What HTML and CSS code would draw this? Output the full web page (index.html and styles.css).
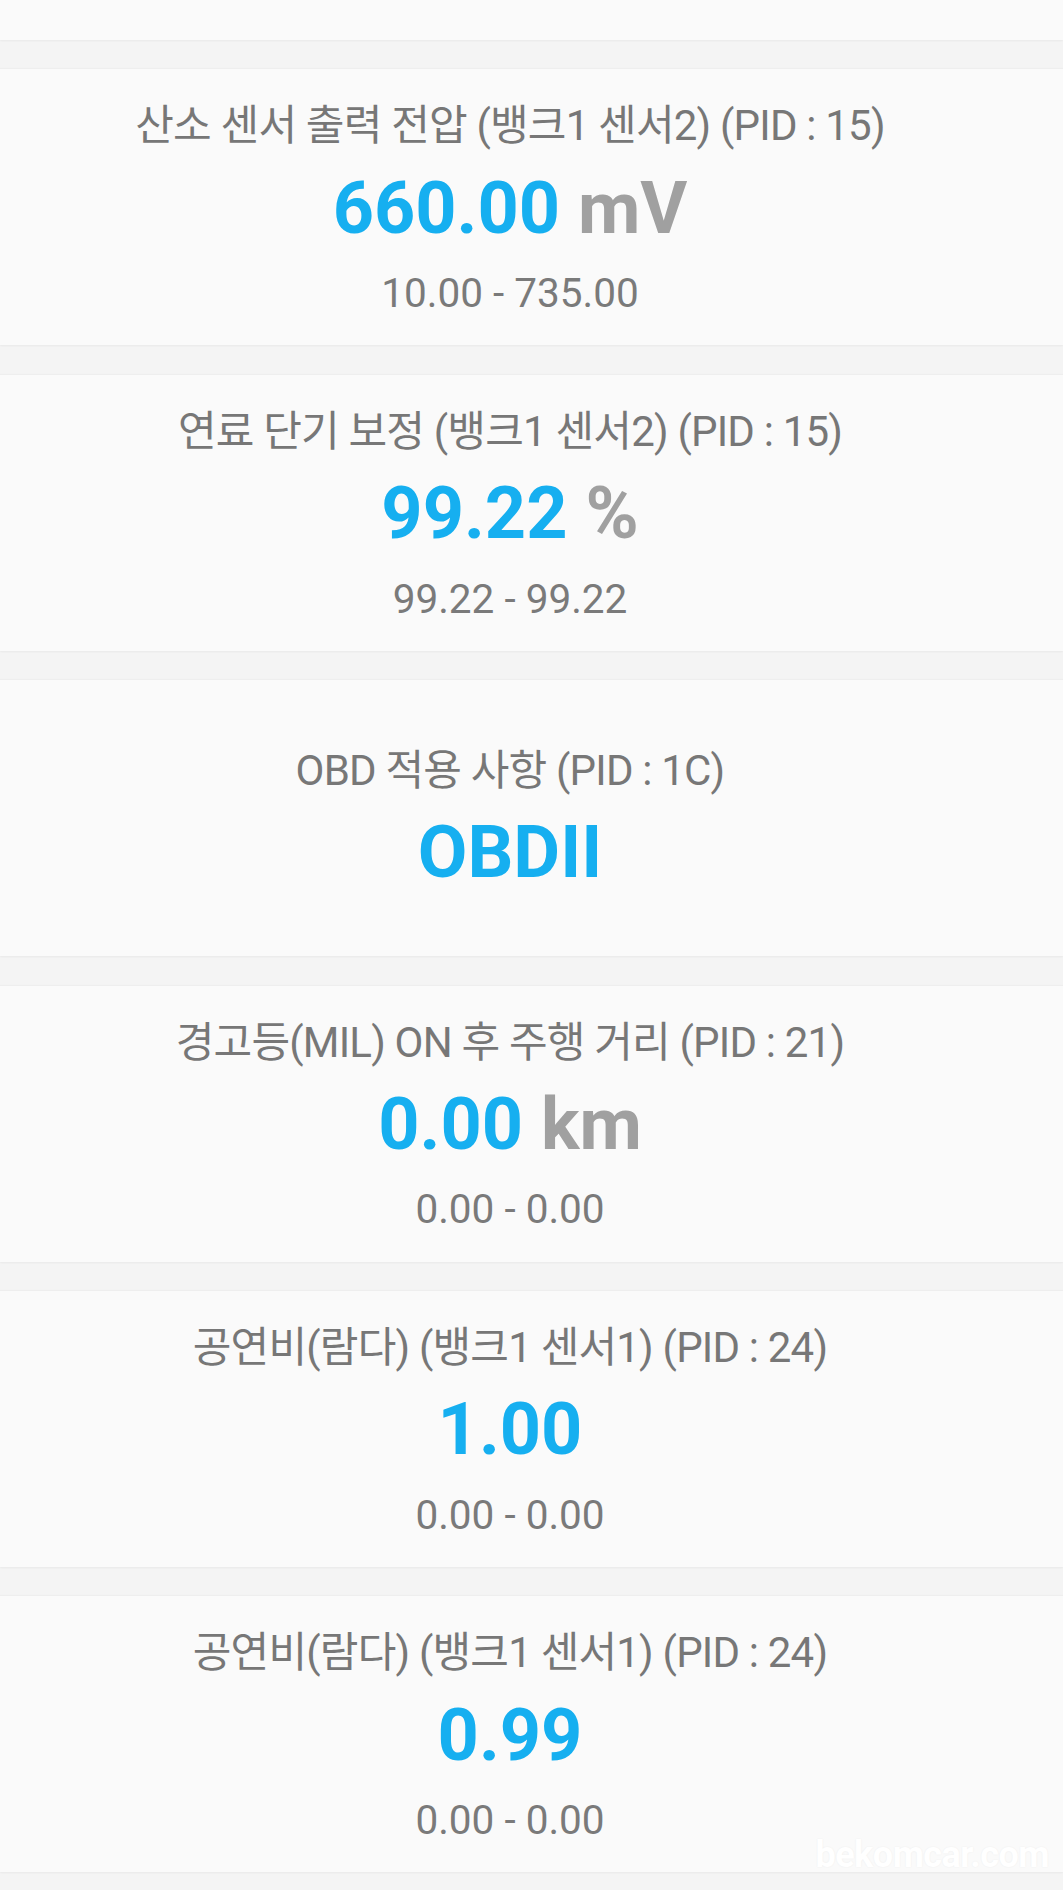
FILE: index.html
```html
<!DOCTYPE html>
<html lang="ko">
<head>
<meta charset="utf-8">
<title>PID 목록</title>
<link rel="stylesheet" href="styles.css">
</head>
<body>
<div class="list">
  <div class="card card-partial"></div>

  <div class="card">
    <div class="title">산소 센서 출력 전압 (뱅크1 센서2) (PID : 15)</div>
    <div class="value"><span class="num">660.00</span> <span class="unit">mV</span></div>
    <div class="range">10.00 - 735.00</div>
  </div>

  <div class="card">
    <div class="title">연료 단기 보정 (뱅크1 센서2) (PID : 15)</div>
    <div class="value"><span class="num">99.22</span> <span class="unit">%</span></div>
    <div class="range">99.22 - 99.22</div>
  </div>

  <div class="card">
    <div class="title">OBD 적용 사항 (PID : 1C)</div>
    <div class="value"><span class="num">OBDII</span></div>
  </div>

  <div class="card">
    <div class="title">경고등(MIL) ON 후 주행 거리 (PID : 21)</div>
    <div class="value"><span class="num">0.00</span> <span class="unit">km</span></div>
    <div class="range">0.00 - 0.00</div>
  </div>

  <div class="card">
    <div class="title">공연비(람다) (뱅크1 센서1) (PID : 24)</div>
    <div class="value"><span class="num">1.00</span></div>
    <div class="range">0.00 - 0.00</div>
  </div>

  <div class="card card-last">
    <div class="title">공연비(람다) (뱅크1 센서1) (PID : 24)</div>
    <div class="value"><span class="num">0.99</span></div>
    <div class="range">0.00 - 0.00</div>
    <div class="watermark">bekomcar.com</div>
  </div>
</div>
</body>
</html>
```
FILE: styles.css
```css
html, body {
  margin: 0;
  padding: 0;
}

body {
  background: #f4f4f4;
  font-family: Roboto, "Noto Sans CJK KR", sans-serif;
  width: 1063px;
  min-height: 1890px;
}

.list {
  display: flex;
  flex-direction: column;
  gap: 29.4px;
}

.card {
  position: relative;
  height: 276px;
  box-sizing: border-box;
  padding-top: 4.8px;
  padding-right: 43px;
  background: #fafafa;
  box-shadow: 0 1px 2px rgba(0, 0, 0, 0.05), 0 -1px 1px rgba(0, 0, 0, 0.025);
  display: flex;
  flex-direction: column;
  align-items: center;
  justify-content: center;
}

.card-partial {
  height: 40px;
  padding: 0;
}

.title {
  font-size: 42px;
  line-height: 48px;
  letter-spacing: -0.8px;
  color: #777777;
  white-space: nowrap;
}

.value {
  margin-top: 17.5px;
  font-size: 72px;
  line-height: 82px;
  font-weight: 700;
  white-space: nowrap;
}

.num {
  color: #16aff0;
}

.unit {
  color: #a0a0a0;
}

.range {
  margin-top: 19.3px;
  font-size: 40.5px;
  line-height: 48px;
  color: #7a7a7a;
  white-space: nowrap;
}

.watermark {
  position: absolute;
  right: 14px;
  bottom: -4px;
  font-size: 36px;
  font-weight: 700;
  letter-spacing: -0.5px;
  color: #ffffff;
  text-shadow: 0 0 2px rgba(0, 0, 0, 0.06);
}
```
